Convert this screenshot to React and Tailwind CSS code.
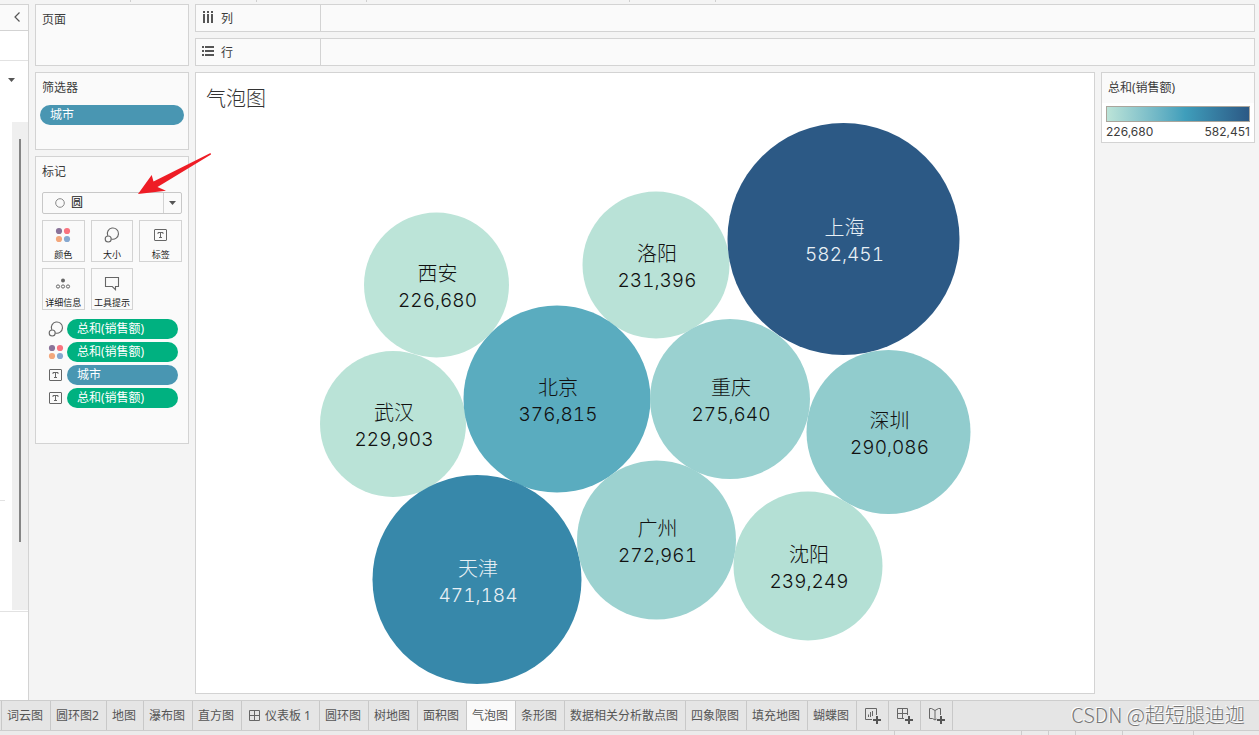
import React from "react";

const sans = "font-['Noto_Sans','Noto_Sans_CJK_SC',sans-serif]";

const bubbles = [
  { name: "西安", value: "226,680", cx: 436.5, cy: 285, r: 72.5, fill: "#bce4d8" },
  { name: "洛阳", value: "231,396", cx: 656, cy: 265, r: 73.5, fill: "#b9e2d7" },
  { name: "上海", value: "582,451", cx: 843.5, cy: 239, r: 116, fill: "#2c5985", light: true },
  { name: "武汉", value: "229,903", cx: 393, cy: 424, r: 73, fill: "#bae3d7" },
  { name: "北京", value: "376,815", cx: 557, cy: 399, r: 93.5, fill: "#5aacbf" },
  { name: "重庆", value: "275,640", cx: 730, cy: 399, r: 80, fill: "#9ad1d0" },
  { name: "深圳", value: "290,086", cx: 888.5, cy: 432, r: 82, fill: "#91cccd" },
  { name: "天津", value: "471,184", cx: 477, cy: 579.5, r: 104.5, fill: "#3788aa", light: true },
  { name: "广州", value: "272,961", cx: 656.5, cy: 540, r: 79.5, fill: "#9cd2d0" },
  { name: "沈阳", value: "239,249", cx: 808, cy: 566, r: 74.5, fill: "#b4e0d5" },
];

function SizeIcon() {
  return (
    <svg width="16" height="16" viewBox="0 0 16 16" fill="none" stroke="#666" strokeWidth="1.1">
      <path d="M3.700 8.700A5.600 5.600 0 1 1 7.400 12" />
      <circle cx="4.2" cy="12" r="3" />
    </svg>
  );
}

function ColorIcon() {
  return (
    <svg width="16" height="16" viewBox="0 0 16 16">
      <circle cx="4" cy="4" r="3.1" fill="#8a7399" />
      <circle cx="12" cy="4" r="3.1" fill="#f9737f" />
      <circle cx="4" cy="12" r="3.1" fill="#f3a77c" />
      <circle cx="12" cy="12" r="3.1" fill="#86a8d0" />
    </svg>
  );
}

function LabelIcon() {
  return (
    <svg width="16" height="16" viewBox="0 0 16 16" fill="none" stroke="#666">
      <rect x="1.5" y="2.5" width="12" height="11" rx="0.5" />
      <path d="M5 7V5.5h5V7M7.5 5.5v5M6 10.5h3" />
    </svg>
  );
}

function DetailIcon() {
  return (
    <svg width="16" height="16" viewBox="0 0 16 16" fill="none" stroke="#666" strokeWidth="1">
      <circle cx="8" cy="5.5" r="2" fill="#666" stroke="none" />
      <circle cx="3" cy="11.5" r="1.6" />
      <circle cx="8" cy="11.5" r="1.6" />
      <circle cx="13" cy="11.5" r="1.6" />
    </svg>
  );
}

function TooltipIcon() {
  return (
    <svg width="16" height="16" viewBox="0 0 16 16" fill="none" stroke="#666" strokeWidth="1.1">
      <path d="M1.500 2.500h13v9h-3v3.200l-3.200-3.200h-6.800z" />
    </svg>
  );
}

function GridIcon() {
  return (
    <svg width="11" height="11" viewBox="0 0 11 11" fill="none" stroke="#666">
      <path d="M0.5 0.5h10v10h-10zM5.5 0.5v10M0.5 5.5h10" />
    </svg>
  );
}

function Plus() {
  return <path d="M12 8v8M8 12h8" stroke="#555" strokeWidth="2" />;
}

function NewSheetIcon() {
  return (
    <svg width="16" height="16" viewBox="0 0 16 16" fill="none" stroke="#666">
      <path d="M7 11.5H0.5v-11h11V7M3.5 9V6.500M5.5 9V4M7.5 8V3" />
      <Plus />
    </svg>
  );
}

function NewDashboardIcon() {
  return (
    <svg width="16" height="16" viewBox="0 0 16 16" fill="none" stroke="#666">
      <path d="M7 10.5H0.5v-10h10V7M5.5 0.5v10M0.5 5.5h10" />
      <Plus />
    </svg>
  );
}

function NewStoryIcon() {
  return (
    <svg width="16" height="16" viewBox="0 0 16 16" fill="none" stroke="#666">
      <path d="M6 2.500v9.500L3.500 10.500h-3v-10h2L6 2.500l3.500-2h2V7M6 12l1.500-1" />
      <Plus />
    </svg>
  );
}

function Card({ title, className, children }) {
  return (
    <section className={`border border-[#d3d3d3] bg-[#fafafa] ${className}`}>
      <h2 className="px-1.5 pt-[7px] text-xs leading-4 text-[#3c3c3c]">{title}</h2>
      {children}
    </section>
  );
}

function Pill({ children, className }) {
  return (
    <button type="button" className={`flex h-5 items-center rounded-full px-2.5 text-left text-xs text-white ${className}`}>
      {children}
    </button>
  );
}

function Shelf({ label, children }) {
  return (
    <div className="flex h-7 border border-[#d3d3d3] bg-[#fafafa]">
      <div className="flex w-[125px] items-center gap-1.5 border-r border-[#d3d3d3] pt-0.5 pl-1.5 text-xs text-[#3c3c3c]">
        <svg className="mb-1" width="13" height="12" viewBox="0 0 13 12" fill="#555">
          {children}
        </svg>
        {label}
      </div>
    </div>
  );
}

const markButtons = [
  ["颜色", ColorIcon],
  ["大小", SizeIcon],
  ["标签", LabelIcon],
  ["详细信息", DetailIcon],
  ["工具提示", TooltipIcon],
];

const encodings = [
  [SizeIcon, "总和(销售额)", "bg-[#00b180]"],
  [ColorIcon, "总和(销售额)", "bg-[#00b180]"],
  [LabelIcon, "城市", "bg-[#4996b2]"],
  [LabelIcon, "总和(销售额)", "bg-[#00b180]"],
];

const tabs = [
  "词云图", "圆环图2", "地图", "瀑布图", "直方图", "仪表板 1", "圆环图", "树地图", "面积图",
  "气泡图", "条形图", "数据相关分析散点图", "四象限图", "填充地图", "蝴蝶图",
];

const newTabs = [
  ["新建工作表", NewSheetIcon],
  ["新建仪表板", NewDashboardIcon],
  ["新建故事", NewStoryIcon],
];

function DataPane() {
  return (
    <aside className="flex w-[29px] shrink-0 flex-col border-r border-[#d3d3d3] bg-white">
      <button type="button" aria-label="折叠" className="flex h-[27px] items-center justify-end border-y border-[#d3d3d3] bg-[#fafafa] pr-2 pb-0.5">
        <svg width="6" height="10" viewBox="0 0 6 10" fill="none" stroke="#555" strokeWidth="1.2">
          <path d="M5.500 0.500L1 5l4.500 4.500" />
        </svg>
      </button>
      <div className="h-[30px] border-b border-[#e2e2e2]" />
      <button type="button" aria-label="菜单" className="flex h-[61px] items-start pt-[17px] pl-2">
        <svg width="7" height="4" viewBox="0 0 7 4"><path d="M0 0h7L3.500 4z" fill="#555" /></svg>
      </button>
      <div className="flex min-h-0 flex-1 border-b border-[#e2e2e2]">
        <div className="flex w-3 flex-col justify-end">
          <div className="mb-[110px] w-[5px] border-b border-[#e2e2e2]" />
        </div>
        <div className="mb-px flex flex-1 justify-center bg-[#efefef] pt-[17px] pb-[68px]">
          <div className="w-0.5 bg-[#858585]" />
        </div>
      </div>
      <div className="h-[88px]" />
    </aside>
  );
}

function MarksCard() {
  return (
    <Card title="标记" className="h-72">
      <div className="px-1.5 pt-3">
        <div className="relative flex h-[22px] items-center rounded-xs border border-[#c8c8c8] bg-[#fafafa]">
          <svg className="pointer-events-none absolute left-3" width="10" height="10" viewBox="0 0 10 10" fill="none" stroke="#888">
            <circle cx="5" cy="5" r="4.300" />
          </svg>
          <select aria-label="标记类型" className="h-5 w-full appearance-none bg-transparent pl-7 text-xs leading-5 text-[#222] outline-none">
            <option>圆</option>
          </select>
          <div className="pointer-events-none absolute right-0 flex h-5 w-[18px] items-center justify-center border-l border-[#d3d3d3]">
            <svg width="7" height="4" viewBox="0 0 7 4"><path d="M0 0h7L3.500 4z" fill="#555" /></svg>
          </div>
          <svg className="pointer-events-none absolute -top-[41px] left-[94px] z-10" width="75" height="44" viewBox="137 152 75 44">
            <path d="M138 194L151.700 175L153.500 181.500L210.500 153L211 154.500L157.500 187L166 190.700z" fill="#ee1c25" />
          </svg>
        </div>
        <div className="grid grid-cols-3 gap-1.5 pt-1.5">
          {markButtons.map(([label, Icon]) => (
            <button key={label} type="button" className="flex h-[42px] flex-col items-center border border-[#d3d3d3] pt-1.5 text-[9px] leading-3 whitespace-nowrap text-[#222]">
              <Icon />
              <span className="pt-1.5">{label}</span>
            </button>
          ))}
        </div>
      </div>
      <ul className="flex flex-col gap-[3px] pt-[9px] pr-2.5 pl-3">
        {encodings.map(([Icon, label, color], i) => (
          <li key={i} className="flex items-center gap-[3px]">
            <Icon />
            <Pill className={`flex-1 ${color}`}>{label}</Pill>
          </li>
        ))}
      </ul>
    </Card>
  );
}

function BubbleChart() {
  return (
    <svg className="min-h-0 w-full flex-1" viewBox="196 121 898 572" role="img" aria-label="气泡图">
      {bubbles.map((b) => (
        <g key={b.name} textAnchor="middle" fill={b.light ? "#e8f0f5" : "#111"}>
          <circle cx={b.cx} cy={b.cy} r={b.r} fill={b.fill} />
          <text x={b.cx + 1} y={b.cy - 4} className="font-['Noto_Sans_CJK_SC',sans-serif] text-[20px] font-light">{b.name}</text>
          <text x={b.cx + 1} y={b.cy + 22} className="font-['Inter',sans-serif] text-[19px] font-light tabular-nums">{b.value}</text>
        </g>
      ))}
    </svg>
  );
}

export default function App() {
  return (
    <div className={`flex h-screen flex-col overflow-hidden bg-[#f4f4f4] ${sans}`}>
      <div className="h-1 shrink-0">
        <div className="flex h-0.5">
          <div className="w-[131px] border-r border-[#d0d0d0]" />
          <div className="w-[126px] border-r border-[#d0d0d0]" />
          <div className="w-[110px] border-r border-[#d0d0d0]" />
          <div className="w-[263px] border-r border-[#d0d0d0]" />
          <div className="w-[86px] border-r border-[#d0d0d0]" />
        </div>
      </div>
      <div className="flex min-h-0 flex-1">
        <DataPane />
        <div className="flex w-[166px] shrink-0 flex-col gap-1.5 px-1.5">
          <Card title="页面" className="h-[62px]" />
          <Card title="筛选器" className="h-[78px]">
            <div className="flex px-1 pt-[9px]">
              <Pill className="flex-1 bg-[#4996b2]">城市</Pill>
            </div>
          </Card>
          <MarksCard />
        </div>
        <main className="flex min-w-0 flex-1 flex-col gap-1.5 pr-1 pb-1.5">
          <Shelf label="列">
            <path d="M1 0h2v2H1zM5 0h2v2H5zM9 0h2v2H9zM1 3h2v9H1zM5 3h2v9H5zM9 3h2v9H9z" />
          </Shelf>
          <Shelf label="行">
            <path d="M0 1h2v2H0zM0 5h2v2H0zM0 9h2v2H0zM3 1h9v2H3zM3 5h9v2H3zM3 9h9v2H3z" />
          </Shelf>
          <div className="flex min-h-0 flex-1 gap-1.5">
            <section className="flex min-w-0 flex-1 flex-col border border-[#d3d3d3] bg-white">
              <h1 className="h-12 px-2.5 pt-3 text-[20px] leading-7 font-light text-[#333]">气泡图</h1>
              <BubbleChart />
            </section>
            <aside className="w-[154px] shrink-0 self-start border border-[#d3d3d3] bg-white text-xs text-[#3c3c3c]">
              <h2 className="h-[30px] bg-[#fafafa] px-1.5 pt-[7px] leading-4">总和(销售额)</h2>
              <div className="px-1 pt-[3px] pb-0.5">
                <div className="h-4 border border-[#aaa59c] bg-linear-to-r from-[#bce4d8] via-[#3f9ebb] via-55% to-[#2c5985]" />
                <div className="flex justify-between pt-0.5 font-['Inter',sans-serif] leading-4">
                  <span>226,680</span>
                  <span>582,451</span>
                </div>
              </div>
            </aside>
          </div>
        </main>
      </div>
      <footer>
        <div className="flex h-[31px] items-stretch border-y border-[#cdcdcd] bg-[#e5e5e5] pl-px">
          <nav className="flex border-l border-[#c8c8c8]">
            {tabs.map((t) => (
              <button
                key={t}
                type="button"
                className={`flex items-center gap-[5px] border-r border-[#c8c8c8] text-xs whitespace-nowrap text-[#555] ${t === "仪表板 1" ? "pr-2 pl-[7px]" : "pr-[7px] pl-[5px]"} ${t === "气泡图" ? "bg-[#fafafa]" : ""}`}
              >
                {t === "仪表板 1" && <GridIcon />}
                {t}
              </button>
            ))}
            {newTabs.map(([label, Icon]) => (
              <button key={label} type="button" aria-label={label} className="flex w-8 items-center justify-center border-r border-[#c8c8c8]">
                <Icon />
              </button>
            ))}
          </nav>
          <p className="ml-auto pr-3.5 font-['Noto_Sans_CJK_SC',sans-serif] text-[20px] leading-7 font-light whitespace-nowrap text-[#777] [text-shadow:-1px_-1px_0_#fff]">CSDN @超短腿迪迦</p>
        </div>
        <div className="flex h-1 justify-end bg-[#ebebeb]">
          <div className="w-[127px] border-l border-[#cdcdcd]" />
          <div className="w-[27px] border-l border-[#cdcdcd]" />
          <div className="w-[27px] border-l border-[#cdcdcd]" />
          <div className="w-[47px] border-l border-[#cdcdcd]" />
          <div className="w-[71px] border-l border-[#cdcdcd]" />
          <div className="w-[66px] border-l border-[#cdcdcd]" />
        </div>
      </footer>
    </div>
  );
}
